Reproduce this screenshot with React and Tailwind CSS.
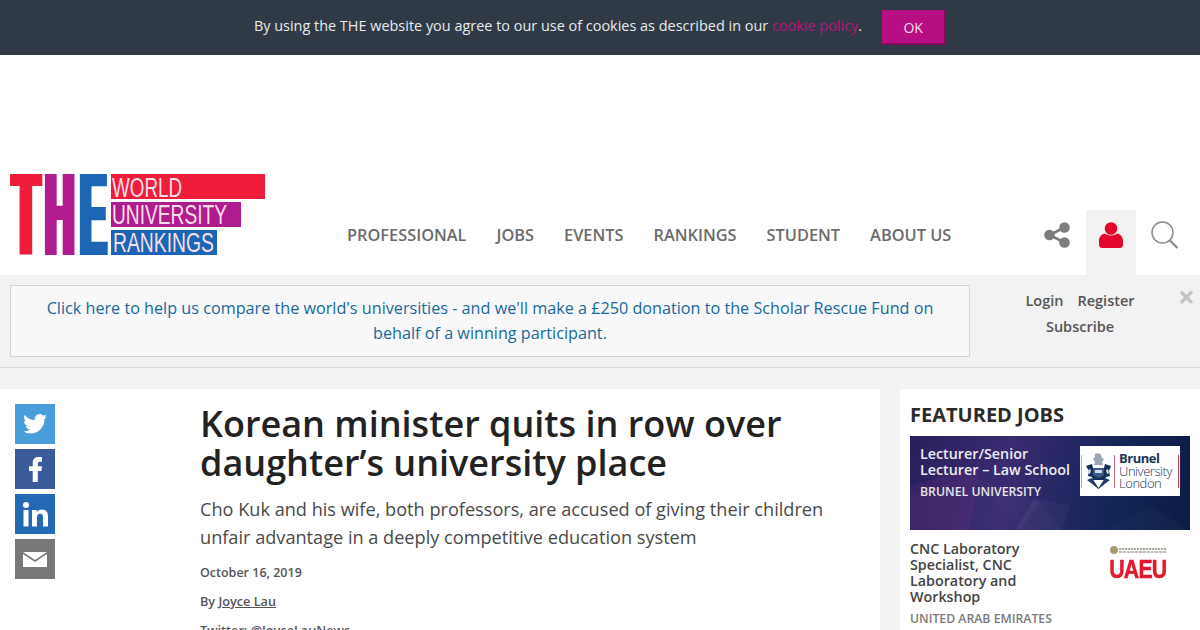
import React from "react";

function Logo() {
  const cond = { fontFamily: '"Liberation Sans", Arial, sans-serif' };
  return (
    <svg width="256" height="83" viewBox="0 0 256 83" className="block">
      <defs>
        <filter id="thick" x="-10%" y="0%" width="120%" height="100%">
          <feMorphology operator="dilate" radius="3 0" />
        </filter>
      </defs>
      <g style={{ ...cond, fontWeight: 700 }} fontSize="100" filter="url(#thick)">
        <text transform="translate(2.1 81) scale(0.455 1.18)" fill="#ef1c3a">T</text>
        <text transform="translate(35.2 81) scale(0.4 1.18)" fill="#b01c8e">H</text>
        <text transform="translate(70.3 81) scale(0.39 1.18)" fill="#1b66b4">E</text>
      </g>
      <rect x="101" y="0" width="154" height="25" fill="#ef1c3a" />
      <rect x="101" y="28" width="130" height="25" fill="#b01c8e" />
      <rect x="101" y="56" width="106" height="25" fill="#1b66b4" />
      <g style={cond} fontSize="27" fill="#f7dfe8">
        <text x="102" y="22.500" textLength="70" lengthAdjust="spacingAndGlyphs">WORLD</text>
        <text x="102" y="50" textLength="115" lengthAdjust="spacingAndGlyphs">UNIVERSITY</text>
        <text x="103" y="78" textLength="101" lengthAdjust="spacingAndGlyphs">RANKINGS</text>
      </g>
    </svg>
  );
}

function Share() {
  return (
    <svg width="26" height="26" viewBox="0 0 26 26" fill="#7d7d7d">
      <circle cx="20.5" cy="5.5" r="5.3" />
      <circle cx="20.5" cy="20.5" r="5.3" />
      <circle cx="5.5" cy="13" r="5.3" />
      <path d="M5.5 13 20.5 5.5M5.5 13 20.5 20.5" stroke="#7d7d7d" strokeWidth="2.6" />
    </svg>
  );
}

function User() {
  return (
    <svg width="24" height="26" viewBox="0 0 24 26" fill="#e2062c">
      <circle cx="12" cy="6.5" r="6.3" />
      <path d="M6 11.500C8 14 16 14 18 11.500 21.500 12 24 15 24 19v4c0 2-1.500 3-3 3H3c-1.500 0-3-1-3-3v-4c0-4 2.500-7 6-7.500Z" />
    </svg>
  );
}

function Search() {
  return (
    <svg width="28" height="28" viewBox="0 0 28 28" fill="none" stroke="#8a8a8a">
      <circle cx="11.5" cy="11.500" r="10.500" strokeWidth="1.500" />
      <path d="M19 19.500 26.500 27" strokeWidth="2.200" />
    </svg>
  );
}

function Twitter() {
  return (
    <svg width="24" height="20" viewBox="0 0 24 20" fill="#fff">
      <path d="M24 2.400a9.800 9.800 0 0 1-2.800.8A4.900 4.900 0 0 0 23.300.500a9.800 9.800 0 0 1-3.100 1.200 4.900 4.900 0 0 0-8.400 4.500A14 14 0 0 1 1.700.900a4.900 4.900 0 0 0 1.500 6.600 4.900 4.900 0 0 1-2.200-.6v.1a4.900 4.900 0 0 0 3.900 4.800 4.900 4.900 0 0 1-2.200.1 4.900 4.900 0 0 0 4.600 3.400A9.900 9.900 0 0 1 0 17.300 14 14 0 0 0 7.500 19.500c9 0 14-7.500 14-14v-.6A10 10 0 0 0 24 2.400Z" />
    </svg>
  );
}

function Facebook() {
  return (
    <svg width="13" height="25" viewBox="0 0 14 27" fill="#fff">
      <path d="M4 27V15H0v-5h4V6.500C4 2 6.500 0 10.500 0H14v5h-2.200C9.800 5 9.500 6 9.500 7.500V10H14l-.6 5H9.500v12Z" />
    </svg>
  );
}

function LinkedIn() {
  return (
    <svg width="25" height="25" viewBox="0 0 25 25" fill="#fff">
      <circle cx="3" cy="3" r="3" />
      <rect x="0.500" y="8" width="5" height="16.500" />
      <path d="M9 8h4.800v2.300c.8-1.500 2.700-2.700 5-2.700 5 0 6.200 3.200 6.200 7.500v9.400h-5v-8.300c0-2-.1-4.400-2.700-4.400-2.700 0-3.300 2-3.300 4.200v8.500H9Z" />
    </svg>
  );
}

function Mail() {
  return (
    <svg width="24" height="15" viewBox="0 0 24 15" fill="#fff">
      <path d="M0 0h24L12 8Z" />
      <path d="M0 2 12 10 24 2V15H0Z" />
    </svg>
  );
}

function SocialButton({ className, children }) {
  return <div className={`w-10 h-10 flex items-center justify-center ${className}`}>{children}</div>;
}

function Crest() {
  return (
    <svg width="27" height="36" viewBox="0 0 27 36" className="shrink-0">
      <path d="M10 1c2-1 5-1 6 1l1 3 2 1-2 3 1 3H9l1-3-2-3 2-2Z" fill="#9aa5b5" />
      <path d="M1 13l6-2 1 4h11l1-4 6 2-2 5 1 5-4 1-1 3H8l-1-3-4-1 1-5Z" fill="#12305a" />
      <path d="M8 15h11v7l-5.500 3L8 22Z" fill="#3d5c85" />
      <path d="M2 27l5-2 6.500 10L20 25l5 2-4 3-7.500 6L6 30Z" fill="#1d3d68" />
      <path d="M10 17h7v3h-7ZM4 16l2 1-1 4-2-1ZM23 16l-2 1 1 4 2-1Z" fill="#d5dbe3" />
    </svg>
  );
}

function BrunelLogo() {
  return (
    <div className="w-[100px] h-[50px] bg-white flex items-center shrink-0 pl-[1px]">
      <div className="w-px h-[33px] bg-[#d9a5b1] shrink-0" />
      <div className="ml-[3px]"><Crest /></div>
      <div className="ml-[2px] w-px h-[33px] bg-[#c8677d] shrink-0" />
      <div className="ml-[4px] w-[59px] flex flex-col text-[13px] leading-[12.500px] text-[#1c3557] font-light tracking-[-0.45px]">
        <span className="font-bold tracking-[-0.5px]">Brunel</span>
        <span>University</span>
        <span>London</span>
      </div>
      <div className="w-px h-[33px] bg-[#c8375a] shrink-0" />
    </div>
  );
}

function UaeuLogo() {
  return (
    <div className="w-[58px] flex flex-col items-center">
      <div className="flex items-center gap-[1px] h-[10px]">
        <div className="w-[8px] h-[8px] rounded-full bg-[#a89a72]" />
        <div className="w-[48px] flex flex-col gap-[1px]">
          <div className="h-[2px] bg-[repeating-linear-gradient(90deg,#b0a9a2_0,#b0a9a2_2px,#ecebe8_2px,#ecebe8_3px)]" />
          <div className="h-[2px] bg-[repeating-linear-gradient(90deg,#c2bcb6_0,#c2bcb6_3px,#efeeec_3px,#efeeec_4px)]" />
        </div>
      </div>
      <div className="text-[26px] leading-[20px] mt-[4px] font-bold text-[#e2182d] font-['Liberation_Sans',sans-serif] tracking-[-1px] scale-x-[0.82] [-webkit-text-stroke:0.5px_#e2182d]">UAEU</div>
    </div>
  );
}

function BannerArt() {
  return (
    <svg className="absolute inset-0" width="280" height="94" viewBox="0 0 280 94">
      <g fill="#fff">
        <path d="M0 60 60 40 110 94H0Z" opacity=".02" />
        <path d="M60 40 130 65 110 94Z" opacity=".03" />
        <path d="M105 94 125 62 152 94Z" opacity=".05" />
        <path d="M125 62 160 70 152 94Z" opacity=".03" />
        <path d="M195 94 240 70 280 94Z" opacity=".02" />
      </g>
      <path d="M0 94V50L70 30 60 94Z" fill="#7a2f80" opacity=".2" />
    </svg>
  );
}

export default function App() {
  return (
    <div className="w-[1200px] h-[630px] overflow-hidden bg-[#f2f2f2] font-['Open_Sans',sans-serif] text-[#222222]">
      <div className="h-[55px] bg-[#2f3a46] flex items-center justify-center text-[#e9ebec] text-[14.450px] leading-5">
        <span className="mb-[4px]">
          By using the THE website you agree to our use of cookies as described in our{" "}
          <span className="text-[#b8127f]">cookie policy</span>.
        </span>
        <div className="ml-[20px] w-[64px] h-[35px] bg-[#b70f83] border-b-2 border-r-2 border-[#8b0a60] flex items-center justify-center text-[14px] text-[#f6dcec] pt-[2px]">
          OK
        </div>
      </div>

      <div className="h-[220px] bg-white flex items-start pt-[119px] pl-[10px]">
        <Logo />
        <nav className="ml-[81px] mt-[50px] flex gap-[30px] text-[16.350px] leading-[22px] font-semibold text-[#6b6b6b]">
          <span>PROFESSIONAL</span>
          <span>JOBS</span>
          <span>EVENTS</span>
          <span>RANKINGS</span>
          <span>STUDENT</span>
          <span>ABOUT US</span>
        </nav>
        <div className="ml-[93px] mt-[48px] flex">
          <Share />
        </div>
        <div className="ml-[16px] mt-[36px] w-[50px] h-[65px] bg-[#f2f2f2] flex justify-center pt-[12px]">
          <User />
        </div>
        <div className="ml-[15px] mt-[47px]">
          <Search />
        </div>
      </div>

      <div className="h-[93px] border-b border-[#dcdcdc] flex pt-[10px] pl-[10px]">
        <div className="w-[960px] h-[72px] bg-[#f8f8f8] border border-[#d4d4d4] px-[20px] pt-[10px] text-center text-[16.200px] leading-[25px] text-[#17689d]">
          Click here to help us compare the world's universities - and we'll make a £250 donation to the Scholar Rescue Fund on behalf of a winning participant.
        </div>
        <div className="w-[220px] text-[14.500px] leading-[26px] font-semibold text-[#555555] pt-[3px] relative">
          <div className="flex justify-center gap-[14px]">
            <span>Login</span>
            <span>Register</span>
          </div>
          <div className="text-center">Subscribe</div>
          <span className="absolute right-[-5px] top-[-3px] text-[30px] leading-[30px] font-bold text-[#c4c4c4]">×</span>
        </div>
      </div>

      <div className="flex mt-[21px] h-[241px]">
        <div className="w-[880px] bg-white flex">
          <div className="w-[200px] shrink-0 pl-[15px] pt-[15px] flex flex-col gap-[5px]">
            <SocialButton className="bg-[#4a9ddb]"><Twitter /></SocialButton>
            <SocialButton className="bg-[#3b5a9a]"><Facebook /></SocialButton>
            <SocialButton className="bg-[#2469b3]"><LinkedIn /></SocialButton>
            <SocialButton className="bg-[#777777]"><Mail /></SocialButton>
          </div>
          <div className="pt-[15px]">
            <h1 className="text-[36px] leading-[39px] font-semibold text-[#222222]">
              Korean minister quits in row over<br />daughter’s university place
            </h1>
            <p className="mt-[13px] text-[18.150px] leading-[28px] text-[#4a4a4a]">
              Cho Kuk and his wife, both professors, are accused of giving their children<br />
              unfair advantage in a deeply competitive education system
            </p>
            <div className="mt-[13px] text-[12.500px] leading-[18px] font-semibold text-[#555555]">October 16, 2019</div>
            <div className="mt-[10px] text-[12.700px] leading-[18px] font-semibold text-[#555555]">
              By <span className="underline">Joyce Lau</span>
            </div>
            <div className="mt-[11px] text-[12.700px] leading-[18px] font-semibold text-[#555555]">
              Twitter: @JoyceLauNews
            </div>
          </div>
        </div>
        <aside className="ml-[20px] w-[300px] bg-white px-[10px] pt-[11px]">
          <h2 className="text-[20px] leading-[30px] font-bold text-[#2b2b2b]">FEATURED JOBS</h2>
          <div className="relative mt-[6px] h-[94px] bg-[linear-gradient(100deg,#27205c_0%,#3a2a72_35%,#142658_70%,#0b1c44_100%)]">
            <BannerArt />
            <div className="relative flex px-[10px] pt-[10px] justify-between">
              <div>
                <div className="text-[14.300px] leading-4 font-semibold text-[#eeeeee]">Lecturer/Senior<br />Lecturer – Law School</div>
                <div className="mt-[5px] text-[12.300px] leading-[18px] font-semibold text-[#e6e6e6]">BRUNEL UNIVERSITY</div>
              </div>
              <BrunelLogo />
            </div>
          </div>
          <div className="mt-[11px] flex justify-between">
            <div>
              <div className="text-[14.300px] leading-4 font-semibold text-[#444444] w-[140px]">CNC Laboratory Specialist, CNC Laboratory and Workshop</div>
              <div className="mt-[5px] text-[12.250px] leading-[18px] font-semibold text-[#7a7a7a]">UNITED ARAB EMIRATES</div>
            </div>
            <div className="mr-[23px] mt-[4px]"><UaeuLogo /></div>
          </div>
        </aside>
      </div>
    </div>
  );
}
